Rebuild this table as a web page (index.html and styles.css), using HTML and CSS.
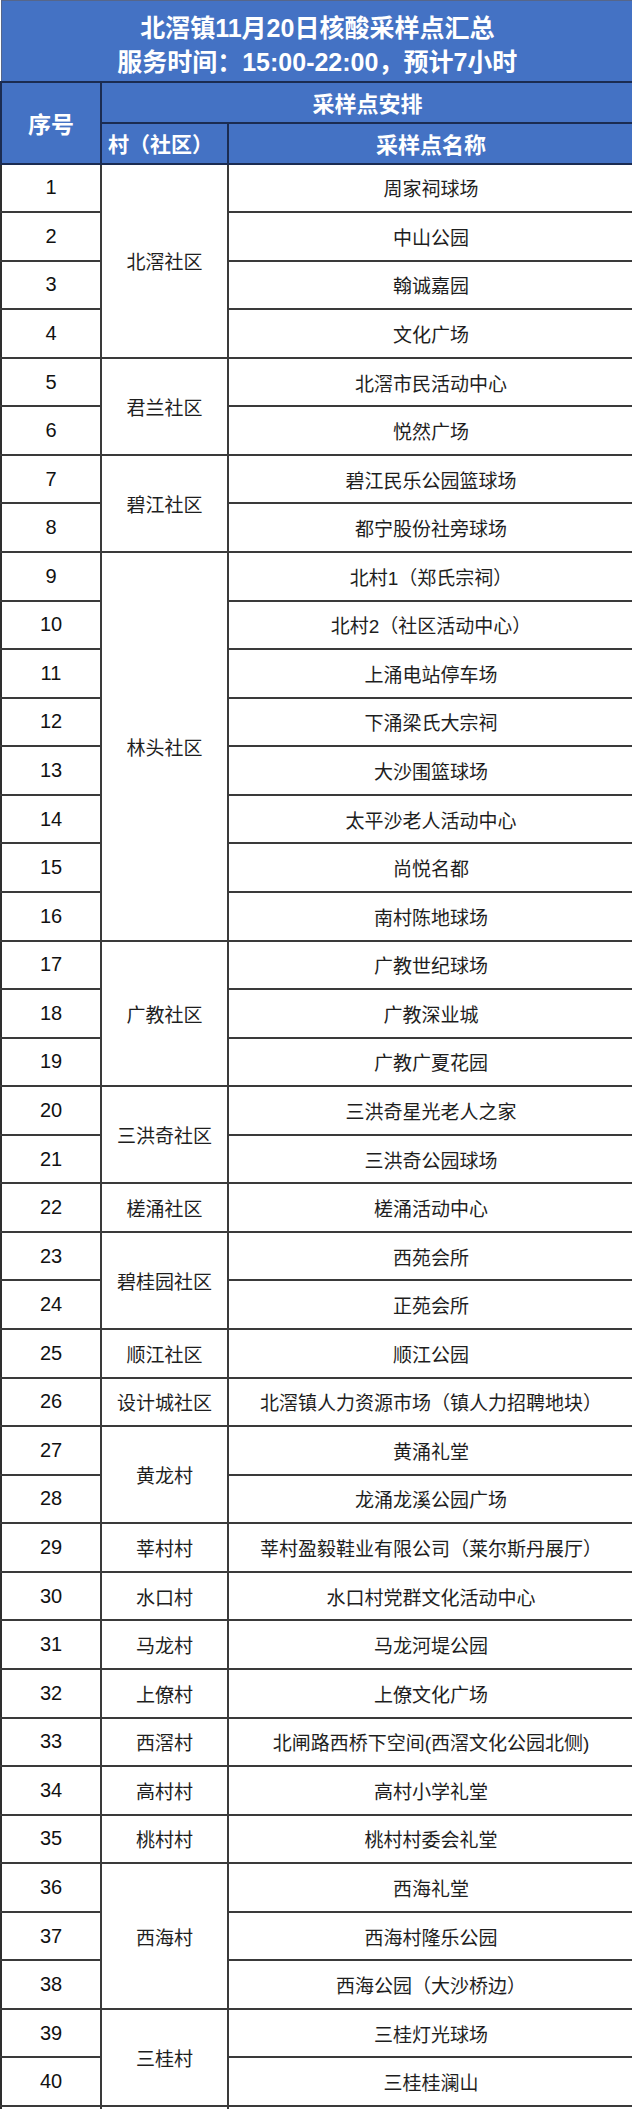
FILE: index.html
```html
<!DOCTYPE html>
<html lang="zh-CN">
<head>
<meta charset="utf-8">
<title>北滘镇11月20日核酸采样点汇总</title>
<link rel="stylesheet" href="styles.css">
</head>
<body>
<table class="sheet">
  <colgroup>
    <col class="c-no">
    <col class="c-vil">
    <col class="c-site">
  </colgroup>
  <thead>
    <tr class="title-row">
      <th colspan="3" class="title">北滘镇11月20日核酸采样点汇总<br>服务时间：15:00-22:00，预计7小时</th>
    </tr>
    <tr class="head-row">
      <th rowspan="2" class="h-no">序号</th>
      <th colspan="2" class="h-group">采样点安排</th>
    </tr>
    <tr class="head-row">
      <th class="h-vil">村（社区）</th>
      <th class="h-site">采样点名称</th>
    </tr>
  </thead>
  <tbody>
    <tr><td class="no">1</td><td class="vil" rowspan="4">北滘社区</td><td class="site">周家祠球场</td></tr>
    <tr><td class="no">2</td><td class="site">中山公园</td></tr>
    <tr><td class="no">3</td><td class="site">翰诚嘉园</td></tr>
    <tr><td class="no">4</td><td class="site">文化广场</td></tr>
    <tr><td class="no">5</td><td class="vil" rowspan="2">君兰社区</td><td class="site">北滘市民活动中心</td></tr>
    <tr><td class="no">6</td><td class="site">悦然广场</td></tr>
    <tr><td class="no">7</td><td class="vil" rowspan="2">碧江社区</td><td class="site">碧江民乐公园篮球场</td></tr>
    <tr><td class="no">8</td><td class="site">都宁股份社旁球场</td></tr>
    <tr><td class="no">9</td><td class="vil" rowspan="8">林头社区</td><td class="site">北村1（郑氏宗祠）</td></tr>
    <tr><td class="no">10</td><td class="site">北村2（社区活动中心）</td></tr>
    <tr><td class="no">11</td><td class="site">上涌电站停车场</td></tr>
    <tr><td class="no">12</td><td class="site">下涌梁氏大宗祠</td></tr>
    <tr><td class="no">13</td><td class="site">大沙围篮球场</td></tr>
    <tr><td class="no">14</td><td class="site">太平沙老人活动中心</td></tr>
    <tr><td class="no">15</td><td class="site">尚悦名都</td></tr>
    <tr><td class="no">16</td><td class="site">南村陈地球场</td></tr>
    <tr><td class="no">17</td><td class="vil" rowspan="3">广教社区</td><td class="site">广教世纪球场</td></tr>
    <tr><td class="no">18</td><td class="site">广教深业城</td></tr>
    <tr><td class="no">19</td><td class="site">广教广夏花园</td></tr>
    <tr><td class="no">20</td><td class="vil" rowspan="2">三洪奇社区</td><td class="site">三洪奇星光老人之家</td></tr>
    <tr><td class="no">21</td><td class="site">三洪奇公园球场</td></tr>
    <tr><td class="no">22</td><td class="vil">槎涌社区</td><td class="site">槎涌活动中心</td></tr>
    <tr><td class="no">23</td><td class="vil" rowspan="2">碧桂园社区</td><td class="site">西苑会所</td></tr>
    <tr><td class="no">24</td><td class="site">正苑会所</td></tr>
    <tr><td class="no">25</td><td class="vil">顺江社区</td><td class="site">顺江公园</td></tr>
    <tr><td class="no">26</td><td class="vil">设计城社区</td><td class="site">北滘镇人力资源市场（镇人力招聘地块）</td></tr>
    <tr><td class="no">27</td><td class="vil" rowspan="2">黄龙村</td><td class="site">黄涌礼堂</td></tr>
    <tr><td class="no">28</td><td class="site">龙涌龙溪公园广场</td></tr>
    <tr><td class="no">29</td><td class="vil">莘村村</td><td class="site">莘村盈毅鞋业有限公司（莱尔斯丹展厅）</td></tr>
    <tr><td class="no">30</td><td class="vil">水口村</td><td class="site">水口村党群文化活动中心</td></tr>
    <tr><td class="no">31</td><td class="vil">马龙村</td><td class="site">马龙河堤公园</td></tr>
    <tr><td class="no">32</td><td class="vil">上僚村</td><td class="site">上僚文化广场</td></tr>
    <tr><td class="no">33</td><td class="vil">西滘村</td><td class="site">北闸路西桥下空间(西滘文化公园北侧)</td></tr>
    <tr><td class="no">34</td><td class="vil">高村村</td><td class="site">高村小学礼堂</td></tr>
    <tr><td class="no">35</td><td class="vil">桃村村</td><td class="site">桃村村委会礼堂</td></tr>
    <tr><td class="no">36</td><td class="vil" rowspan="3">西海村</td><td class="site">西海礼堂</td></tr>
    <tr><td class="no">37</td><td class="site">西海村隆乐公园</td></tr>
    <tr><td class="no">38</td><td class="site">西海公园（大沙桥边）</td></tr>
    <tr><td class="no">39</td><td class="vil" rowspan="2">三桂村</td><td class="site">三桂灯光球场</td></tr>
    <tr><td class="no">40</td><td class="site">三桂桂澜山</td></tr>
    <tr><td class="no">&nbsp;</td><td class="vil">&nbsp;</td><td class="site">&nbsp;</td></tr>
  </tbody>
</table>
</body>
</html>
```
FILE: styles.css
```css
html, body {
  margin: 0;
  padding: 0;
  background: #ffffff;
}

.sheet {
  width: 632px;
  border-collapse: collapse;
  table-layout: fixed;
  font-family: "Liberation Sans", "Noto Sans CJK SC", sans-serif;
}

.c-no { width: 100px; }
.c-vil { width: 127px; }
.c-site { width: 405px; }

/* header */
.sheet thead th {
  background: #4472c4;
  color: #ffffff;
  font-weight: 700;
  padding: 0;
  border: 2px solid #1b2c52;
  text-align: center;
}

.title-row { height: 81px; }

.sheet thead .title {
  font-size: 25px;
  line-height: 34px;
  vertical-align: top;
  padding-top: 10px;
  border-top: 1px solid #56668a;
  border-left: 1px solid #56668a;
  border-right: 0;
}

.head-row { height: 41px; }

.sheet thead .h-no {
  font-size: 23px;
}

.sheet thead .h-group {
  font-size: 22px;
  border-right: 0;
}

.sheet thead .h-vil {
  font-size: 21px;
  text-align: left;
  padding-left: 6px;
}

.sheet thead .h-site {
  font-size: 22px;
  border-right: 0;
}

/* body */
.sheet tbody tr {
  height: 48.575px;
}

.sheet tbody td {
  padding: 0;
  border: 2px solid #3a3a3a;
  text-align: center;
  vertical-align: middle;
  color: #1e1e1e;
  white-space: nowrap;
}

.sheet tbody td.no {
  font-size: 20px;
  color: #111111;
  border-left: 2px solid #2e2e2e;
}

.sheet tbody td.vil {
  font-size: 19px;
}

.sheet tbody td.site {
  font-size: 19px;
  border-right: 0;
}
```
